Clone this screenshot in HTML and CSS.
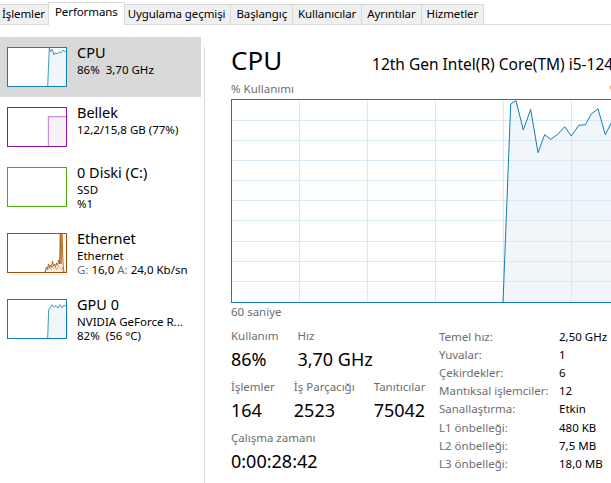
FILE: index.html
```html
<!DOCTYPE html>
<html lang="tr">
<head>
<meta charset="utf-8">
<title>Görev Yöneticisi - Performans</title>
<link rel="stylesheet" href="styles.css">
</head>
<body>
<div class="tabs">
  <div class="tab">İşlemler</div>
  <div class="tab tab-active">Performans</div>
  <div class="tab">Uygulama geçmişi</div>
  <div class="tab">Başlangıç</div>
  <div class="tab">Kullanıcılar</div>
  <div class="tab">Ayrıntılar</div>
  <div class="tab">Hizmetler</div>
</div>
<div class="content">
  <aside class="sidebar">
    <div class="item item-selected">
      <svg class="thumb thumb-cpu" viewBox="0 0 58 38">
        <polygon class="fill-cpu" points="39.7,38 41.3,0.3 42.7,3.7 44.3,1.3 46,7 47.3,4.7 49.3,6 51.3,4 53.3,4.7 55.3,2 57.3,4 58,3.5 58,38"/>
        <polyline class="line-cpu" points="39.7,38 41.3,0.3 42.7,3.7 44.3,1.3 46,7 47.3,4.7 49.3,6 51.3,4 53.3,4.7 55.3,2 57.3,4 58,3.5"/>
      </svg>
      <div class="item-text">
        <div class="item-title">CPU</div>
        <div class="item-sub">86%&nbsp; 3,70 GHz</div>
      </div>
    </div>
    <div class="item">
      <svg class="thumb thumb-mem" viewBox="0 0 58 38">
        <rect class="fill-mem" x="40.3" y="8.7" width="17.7" height="29.3"/>
        <polyline class="line-mem" points="40.3,38 40.3,8.7 58,8.7"/>
      </svg>
      <div class="item-text">
        <div class="item-title">Bellek</div>
        <div class="item-sub">12,2/15,8 GB (77%)</div>
      </div>
    </div>
    <div class="item">
      <svg class="thumb thumb-disk" viewBox="0 0 58 38"></svg>
      <div class="item-text">
        <div class="item-title">0 Diski (C:)</div>
        <div class="item-sub">SSD</div>
        <div class="item-sub">%1</div>
      </div>
    </div>
    <div class="item">
      <svg class="thumb thumb-eth" viewBox="0 0 58 38">
        <polygon class="fill-eth" points="37,38 38.5,33 39.5,35 40.5,30 41.5,34 42.5,31 43.5,33 44.5,27 45.5,32 46.5,30 47.5,33 48.5,29 49.5,31 50.5,26 51.5,30 52.3,0 53,30 54,0 54.7,20 55.5,38"/>
        <polyline class="line-eth-dash" points="37,38 38.5,35 40,36 41.5,33 43,36 44.5,32 46,35 47.5,33 49,36 50.5,31 52,34 53.5,36 55,33 56.5,38"/>
        <polyline class="line-eth" points="37,38 38.5,33 39.5,35 40.5,30 41.5,34 42.5,31 43.5,33 44.5,27 45.5,32 46.5,30 47.5,33 48.5,29 49.5,31 50.5,26 51.5,30 52.3,0 53,30 54,0 54.7,20 55.5,38"/>
      </svg>
      <div class="item-text">
        <div class="item-title">Ethernet</div>
        <div class="item-sub">Ethernet</div>
        <div class="item-sub"><span class="dim">G:</span> 16,0 <span class="dim">A:</span> 24,0 Kb/sn</div>
      </div>
    </div>
    <div class="item">
      <svg class="thumb thumb-gpu" viewBox="0 0 58 38">
        <polygon class="fill-cpu" points="39.7,38 40.7,9.7 42,8 44,4.7 46,7 48,5.7 50,8 52,4.7 54,8 56,5 58,6.4 58,38"/>
        <polyline class="line-cpu" points="39.7,38 40.7,9.7 42,8 44,4.7 46,7 48,5.7 50,8 52,4.7 54,8 56,5 58,6.4"/>
      </svg>
      <div class="item-text">
        <div class="item-title">GPU 0</div>
        <div class="item-sub">NVIDIA GeForce R...</div>
        <div class="item-sub">82%&nbsp; (56 °C)</div>
      </div>
    </div>
  </aside>
  <div class="splitter"></div>
  <main class="main">
    <div class="head">
      <div class="title">CPU</div>
      <div class="model">12th Gen Intel(R) Core(TM) i5-12400F</div>
    </div>
    <div class="axis">
      <span>% Kullanımı</span>
      <span>%100</span>
    </div>
    <svg class="graph" viewBox="0 0 408 204" width="408" height="204">
      <polygon class="graph-fill" points="272,203.5 279.7,5 285,1.7 292.3,31 299.7,10.3 307,53.7 313.7,35.7 319.7,40.3 326.3,35.7 333.7,27.7 340.3,37 347.7,26.3 354.3,25.7 360.3,15 367,9.7 374.3,35.7 380.3,23.7 387,30 394,18 401,27 408,20 408,203.5"/>
      <g class="grid">
        <line x1="0" y1="21.5" x2="408" y2="21.5"/>
        <line x1="0" y1="41.5" x2="408" y2="41.5"/>
        <line x1="0" y1="61.5" x2="408" y2="61.5"/>
        <line x1="0" y1="81.5" x2="408" y2="81.5"/>
        <line x1="0" y1="101.5" x2="408" y2="101.5"/>
        <line x1="0" y1="121.5" x2="408" y2="121.5"/>
        <line x1="0" y1="142.5" x2="408" y2="142.5"/>
        <line x1="0" y1="162.5" x2="408" y2="162.5"/>
        <line x1="0" y1="182.5" x2="408" y2="182.5"/>
        <line x1="68.5" y1="0" x2="68.5" y2="204"/>
        <line x1="136.5" y1="0" x2="136.5" y2="204"/>
        <line x1="204.5" y1="0" x2="204.5" y2="204"/>
        <line x1="272.5" y1="0" x2="272.5" y2="204"/>
        <line x1="340.5" y1="0" x2="340.5" y2="204"/>
      </g>
      <polyline class="graph-line" points="272,203.5 279.7,5 285,1.7 292.3,31 299.7,10.3 307,53.7 313.7,35.7 319.7,40.3 326.3,35.7 333.7,27.7 340.3,37 347.7,26.3 354.3,25.7 360.3,15 367,9.7 374.3,35.7 380.3,23.7 387,30 394,18 401,27 408,20"/>
      <rect class="graph-border" x="0.5" y="0.5" width="407" height="203"/>
    </svg>
    <div class="axis axis-bottom">
      <span>60 saniye</span>
      <span>0</span>
    </div>
    <div class="stats">
      <div class="stats-left">
        <div class="stat-row">
          <div class="stat"><div class="stat-label">Kullanım</div><div class="stat-value">86%</div></div>
          <div class="stat"><div class="stat-label">Hız</div><div class="stat-value">3,70 GHz</div></div>
        </div>
        <div class="stat-row">
          <div class="stat"><div class="stat-label">İşlemler</div><div class="stat-value">164</div></div>
          <div class="stat"><div class="stat-label">İş Parçacığı</div><div class="stat-value">2523</div></div>
          <div class="stat"><div class="stat-label">Tanıtıcılar</div><div class="stat-value">75042</div></div>
        </div>
        <div class="stat-row">
          <div class="stat"><div class="stat-label">Çalışma zamanı</div><div class="stat-value">0:00:28:42</div></div>
        </div>
      </div>
      <div class="specs">
        <span class="spec-key">Temel hız:</span><span>2,50 GHz</span>
        <span class="spec-key">Yuvalar:</span><span>1</span>
        <span class="spec-key">Çekirdekler:</span><span>6</span>
        <span class="spec-key">Mantıksal işlemciler:</span><span>12</span>
        <span class="spec-key">Sanallaştırma:</span><span>Etkin</span>
        <span class="spec-key">L1 önbelleği:</span><span>480 KB</span>
        <span class="spec-key">L2 önbelleği:</span><span>7,5 MB</span>
        <span class="spec-key">L3 önbelleği:</span><span>18,0 MB</span>
      </div>
    </div>
  </main>
</div>
</body>
</html>
```
FILE: styles.css
```css
html, body {
  margin: 0;
  padding: 0;
}

body {
  width: 611px;
  height: 483px;
  overflow: hidden;
  background: #ffffff;
  color: #000000;
  font-family: "Noto Sans", "Segoe UI", sans-serif;
  font-size: 11.5px;
}

/* ---------- tabs ---------- */
.tabs {
  display: flex;
  align-items: flex-end;
  height: 24px;
  margin-left: -4px;
  border-bottom: 1px solid #d9d9d9;
}

.tab {
  height: 20px;
  box-sizing: border-box;
  padding: 0 5px;
  margin-right: -1px;
  border: 1px solid #d9d9d9;
  border-bottom: 0;
  background: #f0f0f0;
  line-height: 18px;
  white-space: nowrap;
  letter-spacing: -0.1px;
}

.tab-active {
  position: relative;
  z-index: 1;
  height: 23px;
  margin-bottom: -1px;
  margin-left: -2px;
  margin-right: -3px;
  padding: 0 6px;
  background: #ffffff;
}

/* ---------- layout ---------- */
.content {
  display: flex;
  height: 458px;
}

.sidebar {
  flex: none;
  width: 201px;
  padding-top: 12px;
}

.splitter {
  flex: none;
  width: 1px;
  margin: 22px 0 0 3px;
  background: #dadada;
}

.main {
  flex: none;
  width: 420px;
  padding: 17px 0 0 26px;
}

/* ---------- sidebar items ---------- */
.item {
  display: flex;
  padding: 5px 0 10px 7px;
}

.item-selected {
  background: #d9d9d9;
}

.thumb {
  flex: none;
  display: block;
  width: 60px;
  height: 40px;
  margin-top: 5px;
  box-sizing: border-box;
  border: 1px solid;
  background: #ffffff;
}

.thumb-cpu,
.thumb-gpu { border-color: #117dbb; }
.thumb-mem { border-color: #8b12ae; }
.thumb-disk { border-color: #4da60c; }
.thumb-eth { border-color: #a74f01; }

.fill-cpu { fill: #f1f6fa; }
.line-cpu { fill: none; stroke: #117dbb; stroke-width: 0.8; }
.fill-mem { fill: #f4f2f4; }
.line-mem { fill: none; stroke: #8b12ae; stroke-width: 0.8; opacity: 0.7; }
.fill-eth { fill: #fcf3eb; }
.line-eth { fill: none; stroke: #a74f01; stroke-width: 0.8; }
.line-eth-dash { fill: none; stroke: #a74f01; stroke-width: 0.7; stroke-dasharray: 1 1; }

.item-text {
  margin-left: 10px;
  padding-bottom: 2px;
  white-space: nowrap;
}

.item-title {
  font-size: 14.5px;
  line-height: 21px;
}

.item-sub {
  font-size: 11.5px;
  line-height: 14px;
}

.dim {
  color: #6e6e6e;
}

/* ---------- main panel ---------- */
.head {
  display: flex;
  align-items: baseline;
  justify-content: space-between;
  width: 408px;
  white-space: nowrap;
}

.title {
  font-size: 26px;
  line-height: 36px;
}

.model {
  font-size: 15.5px;
  line-height: 20px;
}

.axis {
  display: flex;
  justify-content: space-between;
  width: 408px;
  margin-top: 3px;
  color: #6e6e6e;
  line-height: 16px;
}

.axis-bottom {
  margin-top: 1px;
}

.graph {
  display: block;
  width: 408px;
  height: 204px;
  margin-top: 2px;
}

.graph-fill { fill: #f1f6fa; }
.grid line { stroke: #d9eaf4; stroke-width: 1; }
.graph-line { fill: none; stroke: #117dbb; stroke-width: 1; }
.graph-border { fill: none; stroke: #117dbb; stroke-width: 1; }

/* ---------- stats ---------- */
.stats {
  display: flex;
  align-items: flex-start;
  margin-top: 7.5px;
}

.stats-left {
  flex: none;
  width: 208px;
}

.stat-row {
  display: flex;
  gap: 19px;
  margin-bottom: 8px;
  white-space: nowrap;
}

.stat-label {
  color: #6e6e6e;
  line-height: 16px;
}

.stat-value {
  margin-top: 3px;
  font-size: 18px;
  line-height: 24px;
}

.specs {
  display: grid;
  grid-template-columns: 120px auto;
  line-height: 18.2px;
  white-space: nowrap;
}

.spec-key {
  color: #6e6e6e;
}
```
